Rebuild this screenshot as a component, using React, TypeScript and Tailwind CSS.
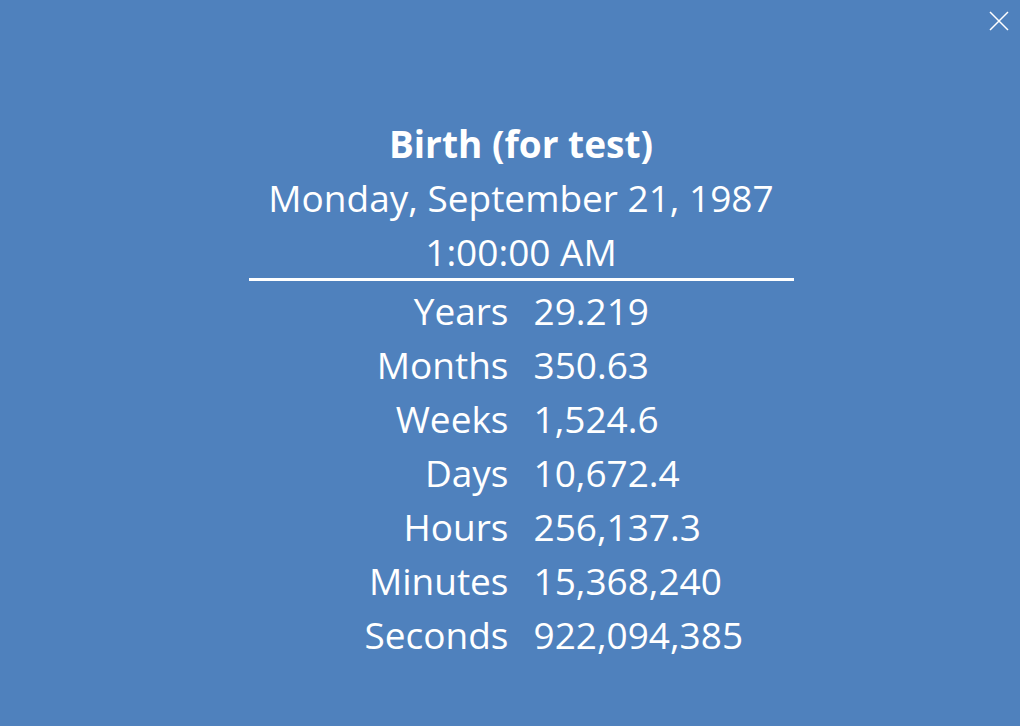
import React from "react";

const rows: [string, string][] = [
  ["Years", "29.219"],
  ["Months", "350.63"],
  ["Weeks", "1,524.6"],
  ["Days", "10,672.4"],
  ["Hours", "256,137.3"],
  ["Minutes", "15,368,240"],
  ["Seconds", "922,094,385"],
];

export default function App() {
  return (
    <div
      className="relative w-[1020px] h-[726px] bg-[#4f81bd] text-white overflow-hidden"
      style={{ fontFamily: '"Open Sans", "Noto Sans", sans-serif' }}
    >
      <button className="absolute right-[11px] top-[11px] w-[20px] h-[20px] flex items-center justify-center">
        <svg width="20" height="20" viewBox="0 0 20 20">
          <path d="M1 1 L19 19 M19 1 L1 19" stroke="white" strokeWidth="1.5" fill="none" />
        </svg>
      </button>
      <div className="flex flex-col items-center pt-[117px] pl-[22px]">
        <div className="w-[545px] flex flex-col items-center">
          <div className="text-[37px] leading-[54px] font-bold">Birth (for test)</div>
          <div className="text-[37px] leading-[54px]">Monday, September 21, 1987</div>
          <div className="text-[37px] leading-[54px]">1:00:00 AM</div>
          <div className="w-full h-[3px] bg-white mt-[-1px]" />
          <div className="w-full grid grid-cols-2 gap-x-[25px] text-[37px] leading-[54px] mt-[3px]">
            {rows.map(([k, v]) => (
              <React.Fragment key={k}>
                <div className="text-right">{k}</div>
                <div className="text-left">{v}</div>
              </React.Fragment>
            ))}
          </div>
        </div>
      </div>
    </div>
  );
}
